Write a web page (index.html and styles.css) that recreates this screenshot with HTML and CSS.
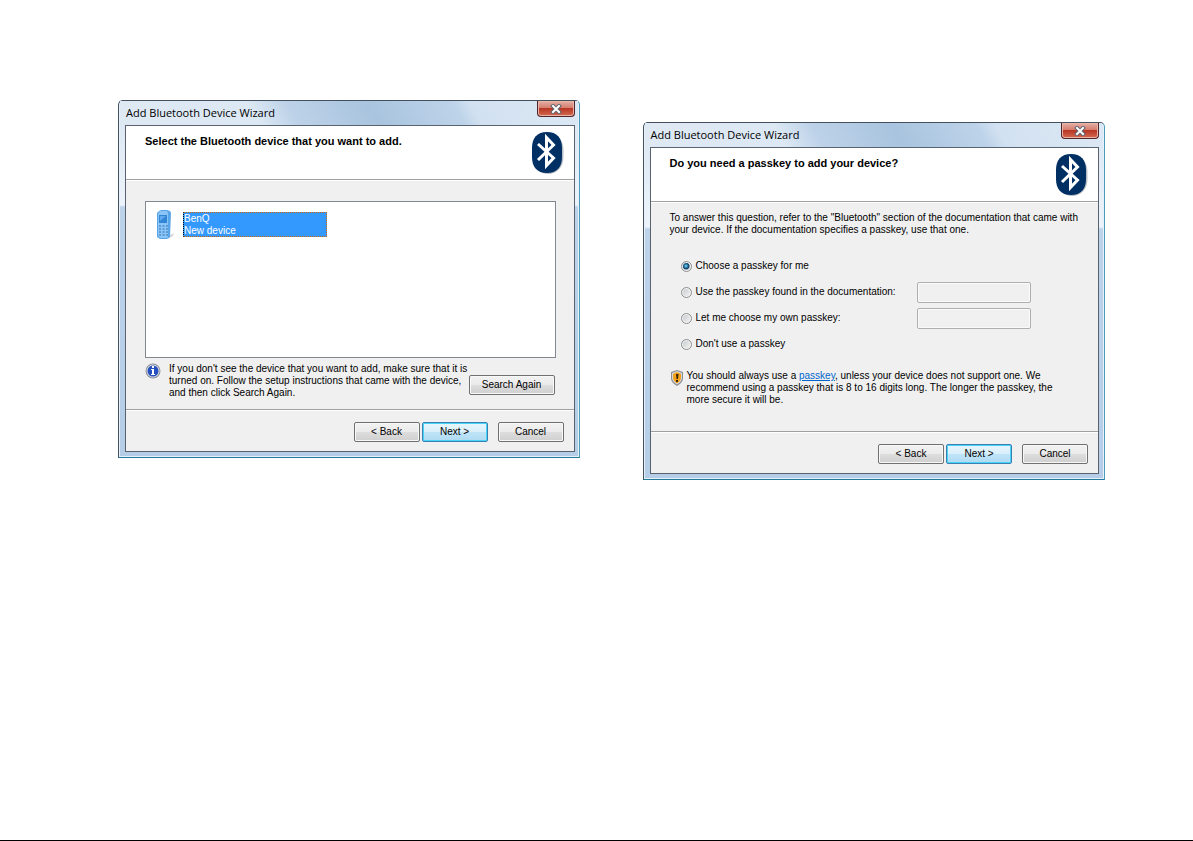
FILE: index.html
```
<!DOCTYPE html>
<html lang="en">
	<head>
		<title>Add Bluetooth Device Wizard</title>
		<meta charset="utf-8">
		<link rel="stylesheet" href="styles.css">
	</head>
	<body>
		<svg class="defs" aria-hidden="true">
			<defs>
				<symbol id="bluetooth" viewBox="0 0 34 44">
					<path d="M16.500 2.500C26 2.500 32.500 9 32.500 19V26C32.500 36 26 43 17 43C9 43 3 37 2 30Z" fill="#b9bdc4"/>
					<path d="M16 1C26 1 31 7 31 17V26C31 36 26 42 16 42C6 42 1 36 1 26V17C1 7 6 1 16 1Z" fill="#002f64"/>
					<path d="M7 13L22.500 27L15.500 34.500V6.500L22.500 14L7 29" fill="none" stroke="#fff" stroke-width="3"/>
				</symbol>
				<symbol id="cross" viewBox="0 0 12 10">
					<path d="M3 2L9 8M9 2L3 8" stroke="#62636e" stroke-width="4" stroke-linecap="square"/>
					<path d="M3 2L9 8M9 2L3 8" stroke="#fff" stroke-width="2" stroke-linecap="square"/>
				</symbol>
			</defs>
		</svg>
		<main class="page">
			<section class="wizard">
				<div class="titlebar">
					<h1>Add Bluetooth Device Wizard</h1>
					<button class="close" type="button" aria-label="Close"><svg width="12" height="10"><use href="#cross"/></svg></button>
				</div>
				<div class="client">
					<div class="head">
						<h2>Select the Bluetooth device that you want to add.</h2>
						<svg class="logo" width="34" height="44"><use href="#bluetooth"/></svg>
					</div>
					<div class="body select">
						<div class="devices">
							<svg width="20" height="30" viewBox="0 0 20 30">
								<path d="M10 27L18 23L17 26L12 29Z" fill="#d5d9dd"/>
								<path d="M3 1L5 0H11L14 1L15 3L14 27L11 29H4L1 27V3Z" fill="#58a5ea"/>
								<path d="M4 1H11L12 3V27L11 28H4L2 26V4Z" fill="#8bc4f6"/>
								<path d="M3 5H11V13H3Z" fill="#3285d5"/>
								<path d="M4 6H10L4 11Z" fill="#5fa9ec"/>
								<path d="M3 16H12M3 19H12M3 22H12M3 25H12" stroke="#4d8cca" stroke-width="1.500" stroke-dasharray="2 1.500"/>
							</svg>
							<div class="device">BenQ<br>New device</div>
						</div>
						<div class="hint">
							<svg width="16" height="16" viewBox="0 0 16 16">
								<circle cx="8" cy="8" r="7.500" fill="#8c909b"/>
								<circle cx="8" cy="8" r="6.500" fill="#d8dbe3"/>
								<circle cx="8" cy="8" r="5.500" fill="#2450c0"/>
								<path d="M7 3H9V5H7ZM6 6H9V11H10V12H6V11H7V7H6Z" fill="#fff"/>
							</svg>
							<p>If you don't see the device that you want to add, make sure that it is<br>turned on. Follow the setup instructions that came with the device,<br>and then click Search Again.</p>
							<button class="search" type="button">Search Again</button>
						</div>
					</div>
					<div class="buttons">
						<button type="button">&lt; Back</button>
						<button class="next" type="button">Next &gt;</button>
						<button class="cancel" type="button">Cancel</button>
					</div>
				</div>
			</section>
			<section class="wizard second">
				<div class="titlebar">
					<h1>Add Bluetooth Device Wizard</h1>
					<button class="close" type="button" aria-label="Close"><svg width="12" height="10"><use href="#cross"/></svg></button>
				</div>
				<div class="client">
					<div class="head">
						<h2>Do you need a passkey to add your device?</h2>
						<svg class="logo" width="34" height="44"><use href="#bluetooth"/></svg>
					</div>
					<div class="body question">
						<p>To answer this question, refer to the "Bluetooth" section of the documentation that came with<br>your device. If the documentation specifies a passkey, use that one.</p>
						<form class="options">
							<div class="option">
								<label><input type="radio" name="passkey" checked>Choose a passkey for me</label>
							</div>
							<div class="option">
								<label><input type="radio" name="passkey">Use the passkey found in the documentation:</label>
								<input type="text" aria-label="Passkey found in the documentation" disabled>
							</div>
							<div class="option">
								<label><input type="radio" name="passkey">Let me choose my own passkey:</label>
								<input type="text" aria-label="My own passkey" disabled>
							</div>
							<div class="option">
								<label><input type="radio" name="passkey">Don't use a passkey</label>
							</div>
						</form>
						<div class="warning">
							<svg width="14" height="16" viewBox="0 0 14 16">
								<path d="M7 0L13 2V8C13 12 10 14 7 16C4 14 1 12 1 8V2Z" fill="#8b8f94"/>
								<path d="M7 1L12 3V8C12 11 9.500 13 7 14.500C4.500 13 2 11 2 8V3Z" fill="#d5d7d9"/>
								<path d="M7 2L11 4V8C11 10 9 12 7 13.500C5 12 3 10 3 8V4Z" fill="#f5a21b"/>
								<path d="M6 4H8.500L8 9H6.500ZM6 10H8V12H6Z" fill="#3a2508"/>
							</svg>
							<p>You should always use a <a href="#">passkey</a>, unless your device does not support one. We<br>recommend using a passkey that is 8 to 16 digits long. The longer the passkey, the<br>more secure it will be.</p>
						</div>
					</div>
					<div class="buttons">
						<button type="button">&lt; Back</button>
						<button class="next" type="button">Next &gt;</button>
						<button class="cancel" type="button">Cancel</button>
					</div>
				</div>
			</section>
		</main>
	</body>
</html>
```

FILE: styles.css
```
* {
	box-sizing: border-box;
}
body {
	margin: 0;
	min-height: 100vh;
	background-color: #fff;
	border-bottom: 1px solid #000;
	color: #000;
	font-family: "Liberation Sans", Arial, sans-serif;
	font-size: 10px;
	line-height: 12px;
}
h1, h2, p {
	margin: 0;
	white-space: nowrap;
}
svg {
	display: block;
	flex: none;
}
.defs {
	position: absolute;
	width: 0;
	height: 0;
}
.page {
	display: flex;
	align-items: flex-start;
	gap: 63px;
	padding: 100px 88px 0 118px;
}
.wizard {
	flex: 1;
	min-width: 0;
	padding: 0 4px 5px 6px;
	border: 1px solid #45505f;
	border-right-color: #4a9db8;
	border-bottom-color: #237a9b;
	border-radius: 5px 5px 0 0;
	background: linear-gradient(#d9e6f3, #edf3fa 104px, #bcd3ea 106px, #b5cde6);
	box-shadow: inset 0 0 0 1px #e6f0fa;
}
.second {
	margin-top: 22px;
	padding-right: 5px;
}
.titlebar {
	display: flex;
	justify-content: space-between;
	height: 24px;
	margin: 0 -3px 0 -5px;
	padding: 0 3px 0 6px;
	background: linear-gradient(60deg, #dfe9f4 0%, #dce8f4 30%, #bdd2e8 38%, #a9c4df 55%, #bdd3e9 73%, #d2e1f1 77%, #dce8f4 100%);
}
.titlebar h1 {
	padding-top: 4px;
	font: 11px/16px "Open Sans", "Segoe UI", sans-serif;
}
.close {
	display: flex;
	align-items: center;
	justify-content: center;
	width: 38px;
	height: 16px;
	padding: 0;
	border: 1px solid #50242a;
	border-top: 0;
	border-radius: 0 0 4px 4px;
	background: linear-gradient(#e5b0a5, #d57f70 45%, #b93724 50%, #d26a50);
	box-shadow: inset 0 0 0 1px #e9b5a8;
}
.client {
	border: 1px solid #59636f;
	background-color: #f0f0f0;
}
.head {
	display: flex;
	justify-content: space-between;
	height: 54px;
	padding: 5px 9px 0 19px;
	border-bottom: 1px solid #a0a0a0;
	background-color: #fff;
}
.head h2 {
	padding-top: 4px;
	font-size: 11px;
	line-height: 12px;
}
.body {
	height: 230px;
	border-top: 1px solid #fff;
	border-bottom: 1px solid #a0a0a0;
}
.select {
	padding: 20px 18px 0 19px;
}
.question {
	padding: 9px 20px 0 19px;
}
.devices {
	display: flex;
	gap: 7px;
	height: 157px;
	padding: 8px 10px;
	border: 1px solid #828790;
	background-color: #fff;
}
.device {
	width: 144px;
	height: 25px;
	margin-top: 2px;
	border: 1px dotted #cc6600;
	border-left-color: #000;
	background-color: #3399ff;
	color: #fff;
}
.hint {
	display: flex;
	gap: 8px;
	padding-top: 5px;
}
.hint p {
	flex: 1;
	min-width: 0;
}
button {
	width: 66px;
	height: 20px;
	padding: 0;
	border: 1px solid #707070;
	border-radius: 2px;
	background: linear-gradient(#f2f2f2, #ebebeb 48%, #dddddd 52%, #cfcfcf);
	box-shadow: inset 0 0 0 1px #f8f8f8;
	color: #000;
	font: inherit;
}
.search {
	flex: none;
	width: 86px;
	margin: 12px 1px 0 0;
}
.buttons {
	display: flex;
	justify-content: flex-end;
	gap: 2px;
	padding: 11px 10px 9px;
	border-top: 1px solid #fff;
}
.next {
	border-color: #3c7fb1;
	background: linear-gradient(#e8f6fd, #d9effb 48%, #bfe4f8 52%, #afdaf2);
	box-shadow: inset 0 0 0 1px #48d3f8;
}
.cancel {
	margin-left: 8px;
}
.options {
	padding: 17px 0 0 11px;
}
.option {
	display: flex;
	align-items: center;
	justify-content: space-between;
	height: 26px;
	padding-right: 47px;
}
.option label {
	display: flex;
	align-items: center;
	gap: 4px;
}
input[type=radio] {
	appearance: none;
	width: 11px;
	height: 11px;
	margin: 0;
	border: 1px solid #8e8f8f;
	border-radius: 50%;
	background: linear-gradient(135deg, #c4c8cc, #f6f6f6);
	box-shadow: inset 0 0 0 1px #f4f4f4;
}
input[type=radio]:checked {
	background: radial-gradient(circle at 4px 4px, #8fdcf5, #1a6d9b 2px, #103a5e 3px, #d9dde0 4px);
}
input[type=text] {
	width: 114px;
	height: 21px;
	border: 1px solid #afafaf;
	border-radius: 2px;
	background-color: #f0f0f0;
	box-shadow: inset 0 0 0 1px #fafafa;
}
.warning {
	display: flex;
	gap: 3px;
	padding-top: 13px;
}
a {
	color: #0066cc;
}
```
